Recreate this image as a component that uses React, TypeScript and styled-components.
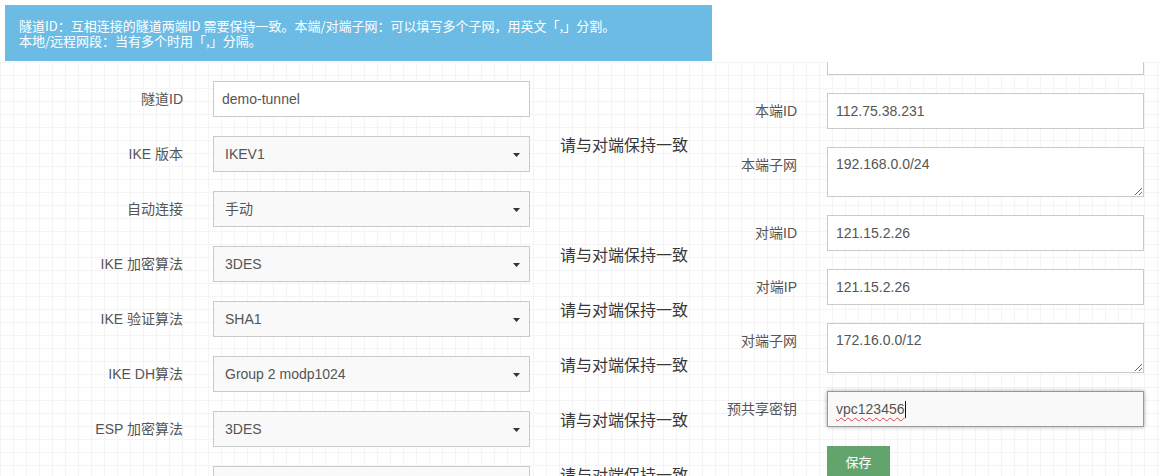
import React from 'react';
import styled, { createGlobalStyle } from 'styled-components';

const GlobalStyle = createGlobalStyle`
  html, body {
    margin: 0;
    padding: 0;
    overflow: hidden;
    background: #fff;
  }
  body {
    font-family: "Liberation Sans", "Noto Sans CJK SC", sans-serif;
  }
`;

const Header = styled.div`
  height: 62px;
  padding: 5px 0 0 5px;
  box-sizing: border-box;
  background: #fff;
`;

const Banner = styled.div`
  width: 707px;
  height: 56px;
  box-sizing: border-box;
  padding: 13px 14px;
  background: #6cbbe4;
  color: #fff;
  font-family: "Noto Sans CJK SC", sans-serif;
  font-size: 13px;
  line-height: 15px;
`;

const Body = styled.div`
  display: grid;
  grid-template-columns: 712px 1fr;
  min-height: 414px;
  background-color: #fff;
  background-image:
    linear-gradient(#f4f4f4 1px, transparent 1px),
    linear-gradient(90deg, #f4f4f4 1px, transparent 1px);
  background-size: 13px 13px;
`;

const LeftColumn = styled.div`
  display: flex;
  flex-direction: column;
  gap: 19px;
  padding-top: 19px;
`;

const RightColumn = styled.div`
  display: flex;
  flex-direction: column;
  gap: 18px;
`;

interface RowProps {
  labelWidth: number;
}

const Row = styled.div<RowProps>`
  display: grid;
  grid-template-columns: ${p => p.labelWidth}px 317px auto;
  column-gap: 30px;
  align-items: start;
`;

const Label = styled.label`
  padding-top: 1px;
  text-align: right;
  font-size: 14px;
  line-height: 35px;
  color: #555;
  white-space: nowrap;
`;

const Hint = styled.span`
  margin-top: -1px;
  font-family: "Noto Sans CJK SC", sans-serif;
  font-size: 16px;
  line-height: 18px;
  color: #383838;
  white-space: nowrap;
`;

const TextInput = styled.input`
  display: block;
  width: 317px;
  height: 36px;
  box-sizing: border-box;
  margin: 0;
  padding: 0 8px;
  border: 1px solid #cacaca;
  border-radius: 0;
  background: #fff;
  color: #555;
  font-family: inherit;
  font-size: 14px;
  outline: none;
`;

const TextArea = styled.textarea`
  display: block;
  width: 317px;
  height: 50px;
  box-sizing: border-box;
  margin: 0;
  padding: 6px 8px;
  border: 1px solid #cacaca;
  border-radius: 0;
  background: #fff;
  color: #555;
  font-family: inherit;
  font-size: 14px;
  line-height: 20px;
  resize: vertical;
  outline: none;
`;

const SelectWrap = styled.div`
  position: relative;
  width: 317px;
  height: 36px;
`;

const Select = styled.select`
  display: block;
  width: 100%;
  height: 36px;
  box-sizing: border-box;
  margin: 0;
  padding: 0 24px 0 11px;
  border: 1px solid #cacaca;
  border-radius: 0;
  background: #f9f9f9;
  color: #555;
  font-family: inherit;
  font-size: 14px;
  appearance: none;
  outline: none;
`;

const Caret = styled.svg`
  position: absolute;
  right: 10px;
  top: 17px;
  pointer-events: none;
`;

const Stub = styled.div`
  width: 317px;
  height: 13px;
  box-sizing: border-box;
  border: 1px solid #cacaca;
  border-top: none;
  background: #fff;
`;

const FocusedField = styled.div`
  display: flex;
  align-items: center;
  width: 317px;
  height: 36px;
  box-sizing: border-box;
  padding: 0 8px;
  border: 1px solid #999;
  background: #f9f9f9;
  box-shadow: 0 0 4px rgba(0, 0, 0, 0.35);
  color: #555;
  font-size: 14px;
`;

const Misspelled = styled.span`
  text-decoration: underline wavy #e04040;
  text-decoration-thickness: 1px;
  text-underline-offset: 3px;
`;

const TextCursor = styled.span`
  display: inline-block;
  width: 1px;
  height: 17px;
  background: #111;
`;

const SaveButton = styled.button`
  width: 63px;
  height: 32px;
  margin: 1px 0 0 0;
  padding: 0;
  border: none;
  border-radius: 0;
  background: #63a46c;
  color: #fff;
  font-family: "Noto Sans CJK SC", sans-serif;
  font-size: 13px;
  line-height: 30px;
  cursor: pointer;
`;

const Empty = styled.span``;

const HINT = '请与对端保持一致';

interface SelectRow {
  label: string;
  value: string;
  hint: boolean;
}

const selectRows: SelectRow[] = [
  { label: 'IKE 版本', value: 'IKEV1', hint: true },
  { label: '自动连接', value: '手动', hint: false },
  { label: 'IKE 加密算法', value: '3DES', hint: true },
  { label: 'IKE 验证算法', value: 'SHA1', hint: true },
  { label: 'IKE DH算法', value: 'Group 2 modp1024', hint: true },
  { label: 'ESP 加密算法', value: '3DES', hint: true },
  { label: 'ESP 验证算法', value: 'SHA1', hint: true },
];

const CaretIcon = () => (
  <Caret width="7" height="4" viewBox="0 0 7 4">
    <path d="M0 0h7L3.5 4z" fill="#333" />
  </Caret>
);

const App = () => {
  return (
    <>
      <GlobalStyle />
      <Header>
        <Banner>
          隧道ID：互相连接的隧道两端ID 需要保持一致。本端/对端子网：可以填写多个子网，用英文「,」分割。
          <br />
          本地/远程网段：当有多个时用「,」分隔。
        </Banner>
      </Header>
      <Body>
        <LeftColumn>
          <Row labelWidth={183}>
            <Label>隧道ID</Label>
            <TextInput defaultValue="demo-tunnel" />
          </Row>
          {selectRows.map(row => (
            <Row labelWidth={183} key={row.label}>
              <Label>{row.label}</Label>
              <SelectWrap>
                <Select defaultValue={row.value}>
                  <option value={row.value}>{row.value}</option>
                </Select>
                <CaretIcon />
              </SelectWrap>
              {row.hint ? <Hint>{HINT}</Hint> : <Empty />}
            </Row>
          ))}
        </LeftColumn>

        <RightColumn>
          <Row labelWidth={85}>
            <Empty />
            <Stub />
          </Row>
          <Row labelWidth={85}>
            <Label>本端ID</Label>
            <TextInput defaultValue="112.75.38.231" />
          </Row>
          <Row labelWidth={85}>
            <Label>本端子网</Label>
            <TextArea defaultValue="192.168.0.0/24" />
          </Row>
          <Row labelWidth={85}>
            <Label>对端ID</Label>
            <TextInput defaultValue="121.15.2.26" />
          </Row>
          <Row labelWidth={85}>
            <Label>对端IP</Label>
            <TextInput defaultValue="121.15.2.26" />
          </Row>
          <Row labelWidth={85}>
            <Label>对端子网</Label>
            <TextArea defaultValue="172.16.0.0/12" />
          </Row>
          <Row labelWidth={85}>
            <Label>预共享密钥</Label>
            <FocusedField>
              <Misspelled>vpc123456</Misspelled>
              <TextCursor />
            </FocusedField>
          </Row>
          <Row labelWidth={85}>
            <Empty />
            <div>
              <SaveButton>保存</SaveButton>
            </div>
          </Row>
        </RightColumn>
      </Body>
    </>
  );
};

export default App;
